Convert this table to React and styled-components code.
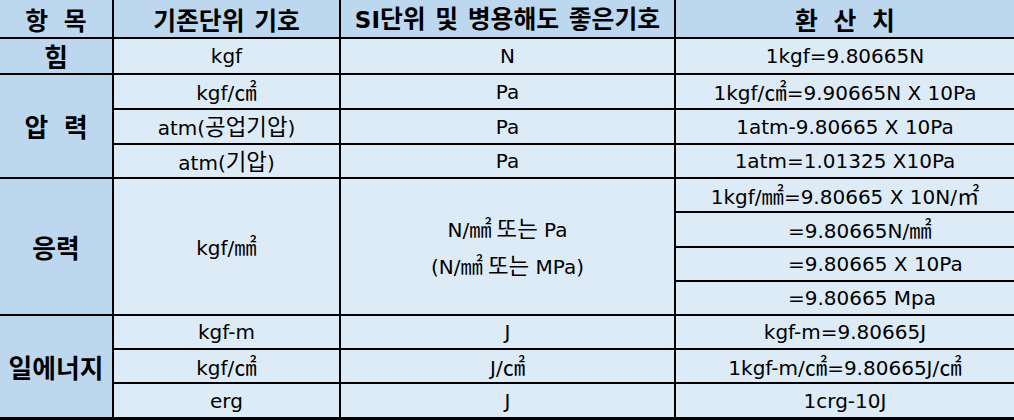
import React from "react";
import styled, { createGlobalStyle } from "styled-components";

const Global = createGlobalStyle`
  html, body { margin: 0; padding: 0; background: #ffffff; }
  body { font-family: "DejaVu Sans", "Noto Sans CJK KR", sans-serif; }
`;

const Table = styled.div`
  display: grid;
  width: 1014px;
  grid-template-columns: 112px 225px 333px 338px;
  grid-template-rows: 37px 34px 33px 33px 32px 32px 33px 32px 32px 32px 32px 33px;
  column-gap: 2px;
  row-gap: 2px;
  background: #000;
  padding-bottom: 3px;
  overflow: hidden;
`;

const Cell = styled.div`
  grid-row: span ${(p) => p.$span || 1};
  background: ${(p) => (p.$head ? "#BDD7EE" : "#DDEBF7")};
  display: flex;
  flex-direction: column;
  align-items: ${(p) => (p.$left ? "flex-start" : "center")};
  justify-content: center;
  padding-left: ${(p) => (p.$left ? "112px" : "0")};
  font-size: 20px;
  color: #000;
  white-space: nowrap;
  line-height: 34px;
`;

const HeadCell = styled(Cell).attrs({ $head: true })`
  font-weight: bold;
  font-size: 23px;
`;

const Label = styled(Cell).attrs({ $head: true })`
  font-weight: bold;
  font-size: 23px;
`;

const Ko = styled.span`
  font-family: "Noto Sans CJK KR", sans-serif;
  font-size: 1.12em;
  word-spacing: ${(p) => p.$ws || "0"};
`;

const HeadKo = styled.span`
  font-family: "Noto Sans CJK KR", sans-serif;
  font-size: 1.08em;
  word-spacing: ${(p) => p.$ws || "4px"};
`;

export default function App() {
  return (
    <>
      <Global />
      <Table>
        <HeadCell><HeadKo $ws="10px">항 목</HeadKo></HeadCell>
        <HeadCell><HeadKo>기존단위 기호</HeadKo></HeadCell>
        <HeadCell><span>SI<HeadKo>단위 및 병용해도 좋은기호</HeadKo></span></HeadCell>
        <HeadCell><HeadKo $ws="10px">환 산 치</HeadKo></HeadCell>

        <Label><Ko>힘</Ko></Label>
        <Cell>kgf</Cell>
        <Cell>N</Cell>
        <Cell>1kgf=9.80665N</Cell>

        <Label $span={3}><Ko $ws="10px">압 력</Ko></Label>
        <Cell><span>kgf/<Ko>㎠</Ko></span></Cell>
        <Cell>Pa</Cell>
        <Cell><span>1kgf/<Ko>㎠</Ko>=9.90665N X 10Pa</span></Cell>
        <Cell><span>atm(<Ko>공업기압</Ko>)</span></Cell>
        <Cell>Pa</Cell>
        <Cell>1atm-9.80665 X 10Pa</Cell>
        <Cell><span>atm(<Ko>기압</Ko>)</span></Cell>
        <Cell>Pa</Cell>
        <Cell>1atm=1.01325 X10Pa</Cell>

        <Label $span={4}><Ko>응력</Ko></Label>
        <Cell $span={4}><span>kgf/<Ko>㎟</Ko></span></Cell>
        <Cell $span={4}>
          <span>N/<Ko>㎟ 또는</Ko> Pa</span>
          <span>(N/<Ko>㎟ 또는</Ko> MPa)</span>
        </Cell>
        <Cell><span>1kgf/<Ko>㎟</Ko>=9.80665 X 10N/<Ko>㎡</Ko></span></Cell>
        <Cell $left><span>=9.80665N/<Ko>㎟</Ko></span></Cell>
        <Cell $left>=9.80665 X 10Pa</Cell>
        <Cell $left>=9.80665 Mpa</Cell>

        <Label $span={3}><Ko>일에너지</Ko></Label>
        <Cell>kgf-m</Cell>
        <Cell>J</Cell>
        <Cell>kgf-m=9.80665J</Cell>
        <Cell><span>kgf/<Ko>㎠</Ko></span></Cell>
        <Cell><span>J/<Ko>㎠</Ko></span></Cell>
        <Cell><span>1kgf-m/<Ko>㎠</Ko>=9.80665J/<Ko>㎠</Ko></span></Cell>
        <Cell>erg</Cell>
        <Cell>J</Cell>
        <Cell>1crg-10J</Cell>
      </Table>
    </>
  );
}
